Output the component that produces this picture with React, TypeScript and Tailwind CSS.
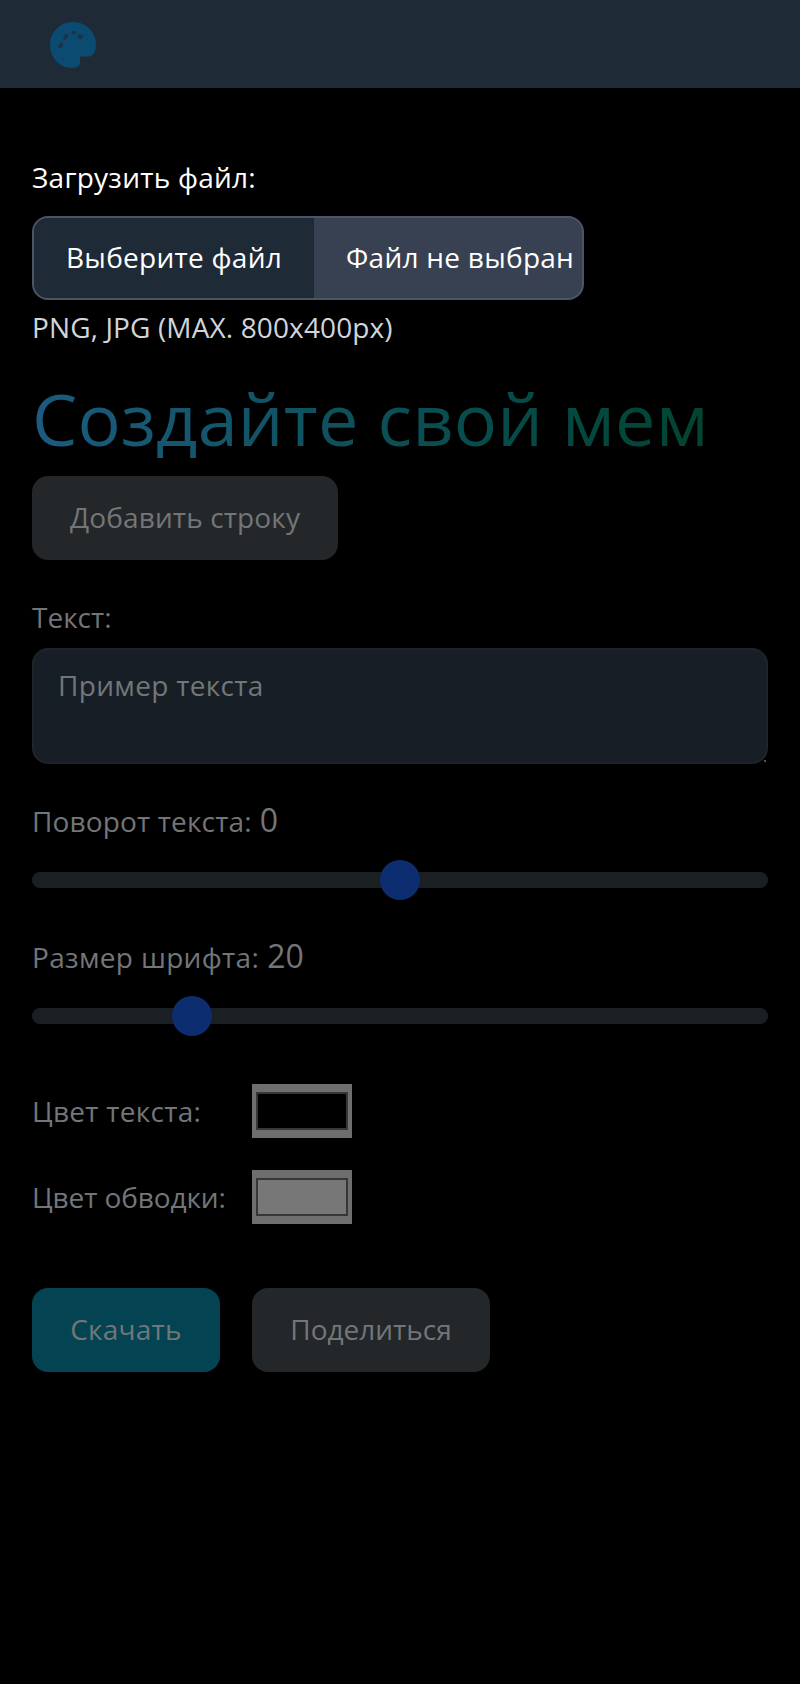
import type { ReactNode } from "react";

function Slider({ position }: { position: number }) {
  return (
    <div className="relative h-4 rounded-full bg-[#1a1f23]">
      <div
        className="absolute -top-3 size-10 rounded-full bg-[#0c2e70]"
        style={{ left: position }}
      />
    </div>
  );
}

function ColorRow({ label, tracking, swatch }: { label: string; tracking: string; swatch: string }) {
  return (
    <div className="flex h-[54px] items-center">
      <div className={`w-[220px] ${tracking}`}>{label}</div>
      <div className="h-[54px] w-[100px] bg-[#6e6e6e] px-1 py-2">
        <div className={`h-full w-full border-2 border-[#373737] ${swatch}`} />
      </div>
    </div>
  );
}

function Button({ className, children }: { className: string; children: ReactNode }) {
  return <button className={`h-[84px] rounded-[16px] pb-0.5 ${className}`}>{children}</button>;
}

export default function App() {
  return (
    <div className="h-[1684px] w-full overflow-hidden bg-black font-['Open_Sans','Noto_Sans',sans-serif] text-[28px] leading-[40px] text-[#737678]">
      <header className="flex h-[88px] items-center bg-[#1f2a37] pt-0.5 pl-[50px]">
        <svg className="size-[46px]" viewBox="0 0 46 46">
          <path
            fill="#0b4b72"
            d="M23 0C10 0 0 10 0 23c0 12.500 10 23 22 23 4 0 8-2 8-5v-6.500h9c4 0 7-5 7-11.500C46 10 36 0 23 0Z"
          />
          <g fill="#203142">
            <path d="m8 23.500 3.500-3 2 1.500-1.500 3.500-3.500.5Z" />
            <path d="m13 15.500 2.500-3.500 3 .5-1.500 4-3 1.500Z" />
            <path d="M22 9h3.500v3.500H23L21.500 11.500Z" />
            <path d="m28.500 12.500 5.500.5-2.500 4h-2.500l-1.500-2Z" />
          </g>
        </svg>
      </header>
      <main className="flex flex-col px-8 pt-[69px]">
        <div className="tracking-[0.25px] text-white">Загрузить файл:</div>
        <div className="mt-[19px] flex h-[84px] w-[552px] items-center overflow-hidden rounded-[16px] border-2 border-[#4b5563] bg-[#374151] text-white">
          <div className="flex h-full w-[280px] shrink-0 items-center bg-[#1f2a37] pb-0.5 pl-8 tracking-[0.27px]">
            Выберите файл
          </div>
          <div className="whitespace-nowrap pb-0.5 pl-8 tracking-[0.27px]">Файл не выбран</div>
        </div>
        <div className="mt-[7px] tracking-[0.13px] text-[#d1d5db]">PNG, JPG (MAX. 800x400px)</div>
        <h1 className="mt-[31px] w-full bg-linear-to-r from-[#1c5b80] to-[#00422a] bg-clip-text text-[72px] leading-[80px] tracking-[0.2px] text-transparent">
          Создайте свой мем
        </h1>
        <div className="mt-[18px] flex">
          <Button className="w-[306px] bg-[#23272a] tracking-[0.14px]">Добавить строку</Button>
        </div>
        <div className="mt-[37px]">Текст:</div>
        <div className="relative mt-[11px]">
          <textarea
            className="block h-[116px] w-full resize-none rounded-[16px] border-2 border-[#202427] bg-[#181e25] px-6 py-[15px] tracking-[0.32px] outline-none"
            defaultValue="Пример текста"
          />
          <div className="absolute right-0.5 bottom-0.5 size-0.5 bg-[#555555]" />
        </div>
        <div className="mt-[32px] flex h-12 items-baseline gap-2">
          <span className="tracking-[0.15px]">Поворот текста:</span>
          <span className="text-[32px] leading-[48px]">0</span>
        </div>
        <div className="mt-[28px]">
          <Slider position={348} />
        </div>
        <div className="mt-[44px] flex h-12 items-baseline gap-2">
          <span className="tracking-[0.33px]">Размер шрифта:</span>
          <span className="text-[32px] leading-[48px]">20</span>
        </div>
        <div className="mt-[28px]">
          <Slider position={140} />
        </div>
        <div className="mt-[60px] flex flex-col gap-8">
          <ColorRow label="Цвет текста:" tracking="tracking-[0.29px]" swatch="bg-black" />
          <ColorRow label="Цвет обводки:" tracking="tracking-[-0.1px]" swatch="bg-[#777777]" />
        </div>
        <div className="mt-16 flex gap-8">
          <Button className="w-[188px] bg-[#044452] tracking-[0.25px]">Скачать</Button>
          <Button className="w-[238px] bg-[#23272a]">Поделиться</Button>
        </div>
      </main>
    </div>
  );
}
